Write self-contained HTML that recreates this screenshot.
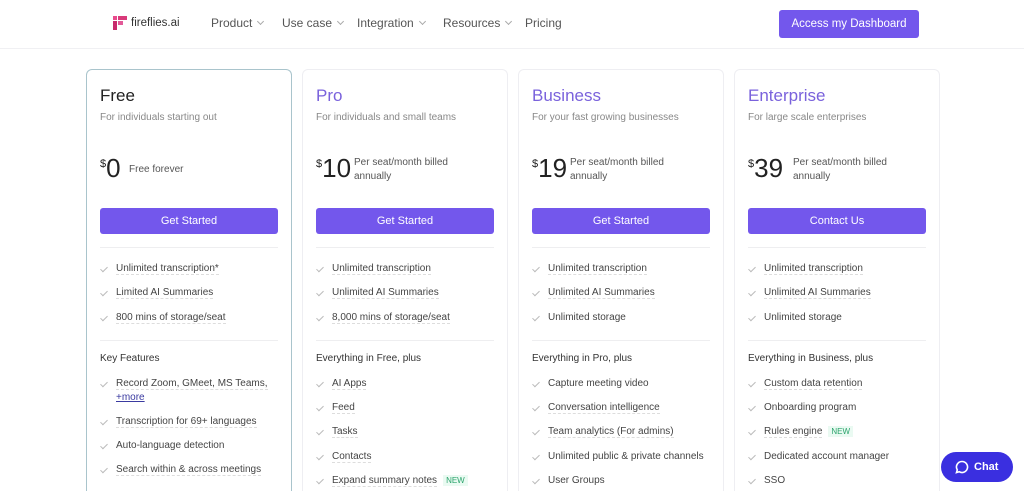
<!DOCTYPE html>
<html><head><meta charset="utf-8"><style>
*{margin:0;padding:0;box-sizing:border-box}
html,body{width:1024px;height:491px;overflow:hidden}
body{background:#fff;font-family:"Liberation Sans",sans-serif;position:relative;color:#333}
.nav{position:absolute;top:0;left:0;width:1024px;height:49px;border-bottom:1px solid #f0f0f3}
.nav span{position:absolute;top:16px;font-size:12px;color:#555}
.chev{display:inline-block;width:5px;height:5px;border-right:1px solid #aaa;border-bottom:1px solid #aaa;transform:rotate(45deg);margin-left:6px;position:relative;top:-3px}
.dash{position:absolute;left:779px;top:10px;width:140px;height:28px;background:#7357ec;border-radius:3px;color:#fff;font-size:11.5px;text-align:center;line-height:28px}
.card{position:absolute;top:69px;width:206px;height:422px;border:1px solid #eeeef2;border-bottom:none;border-radius:6px 6px 0 0}
.card.free{border-color:#a9c4cc}
.t{position:absolute;left:13px;top:16px;font-size:17px;color:#7a62dc}
.free .t{color:#222}
.s{position:absolute;left:13px;top:42px;font-size:10px;color:#888}
.p{position:absolute;left:13px;top:83px;font-size:26px;color:#222;line-height:30px}
.p sup{font-size:11px;position:relative;top:-4px;vertical-align:top}
.pt{position:absolute;left:44px;top:86px;font-size:10px;color:#555;line-height:14px;width:120px}
.btn{position:absolute;left:13px;top:138px;width:178px;height:26px;background:#7357ec;border-radius:3px;color:#fff;font-size:11px;text-align:center;line-height:26px}
.hr{position:absolute;left:13px;width:178px;height:1px;background:#eeeef0}
.i{position:absolute;left:29px;font-size:10px;color:#444;white-space:nowrap;line-height:14px}
.i u{text-decoration:none;border-bottom:1px dashed #ddd}
.i:before{content:"";position:absolute;left:-14px;top:3px;width:3px;height:6px;border-right:1px solid #bbb;border-bottom:1px solid #bbb;transform:rotate(45deg)}
.h{position:absolute;left:13px;font-size:10px;color:#333}
.new{color:#2aa36b;background:#eafaf2;font-size:8px;padding:1px 3px;margin-left:6px}
.chat{position:absolute;left:941px;top:452px;width:72px;height:30px;background:#3a2fe0;border-radius:15px;color:#fff;font-size:11px;font-weight:bold;line-height:30px;padding-left:33px}
</style></head><body>
<div class="nav">
<svg style="position:absolute;left:113px;top:16px" width="14" height="14" viewBox="0 0 14 14"><rect x="0" y="0" width="4" height="4" fill="#e84a8c"/><rect x="5" y="0" width="9" height="4" fill="#d93a7a"/><rect x="0" y="5" width="4" height="9" fill="#c82a6c"/><rect x="5" y="5" width="5" height="4" fill="#e25a98"/></svg>
<span style="left:131px;top:17px;font-size:11.5px;color:#333">fireflies.ai</span>
<span style="left:211px">Product<i class="chev"></i></span>
<span style="left:282px">Use case<i class="chev"></i></span>
<span style="left:357px">Integration<i class="chev"></i></span>
<span style="left:443px">Resources<i class="chev"></i></span>
<span style="left:525px">Pricing</span>
<div class="dash">Access my Dashboard</div>
</div>

<div class="card free" style="left:86px">
<div class="t">Free</div><div class="s">For individuals starting out</div>
<div class="p"><sup>$</sup>0</div><div class="pt" style="left:42px;top:93px">Free forever</div>
<div class="btn">Get Started</div><div class="hr" style="top:177px"></div>
<div class="i" style="top:192px"><u>Unlimited transcription*</u></div>
<div class="i" style="top:216px"><u>Limited AI Summaries</u></div>
<div class="i" style="top:241px"><u>800 mins of storage/seat</u></div>
<div class="hr" style="top:270px"></div>
<div class="h" style="top:283px">Key Features</div>
<div class="i" style="top:307px"><u>Record Zoom, GMeet, MS Teams,</u><br><span style="color:#3a3aa0;text-decoration:underline">+more</span></div>
<div class="i" style="top:345px"><u>Transcription for 69+ languages</u></div>
<div class="i" style="top:369px">Auto-language detection</div>
<div class="i" style="top:393px"><u>Search within &amp; across meetings</u></div>
</div>

<div class="card" style="left:302px">
<div class="t">Pro</div><div class="s">For individuals and small teams</div>
<div class="p"><sup>$</sup>10</div><div class="pt" style="left:51px">Per seat/month billed annually</div>
<div class="btn">Get Started</div><div class="hr" style="top:177px"></div>
<div class="i" style="top:192px"><u>Unlimited transcription</u></div>
<div class="i" style="top:216px"><u>Unlimited AI Summaries</u></div>
<div class="i" style="top:241px"><u>8,000 mins of storage/seat</u></div>
<div class="hr" style="top:270px"></div>
<div class="h" style="top:283px">Everything in Free, plus</div>
<div class="i" style="top:307px"><u>AI Apps</u></div>
<div class="i" style="top:331px"><u>Feed</u></div>
<div class="i" style="top:355px"><u>Tasks</u></div>
<div class="i" style="top:380px"><u>Contacts</u></div>
<div class="i" style="top:404px"><u>Expand summary notes</u><span class="new">NEW</span></div>
</div>

<div class="card" style="left:518px">
<div class="t">Business</div><div class="s">For your fast growing businesses</div>
<div class="p"><sup>$</sup>19</div><div class="pt" style="left:51px">Per seat/month billed annually</div>
<div class="btn">Get Started</div><div class="hr" style="top:177px"></div>
<div class="i" style="top:192px"><u>Unlimited transcription</u></div>
<div class="i" style="top:216px"><u>Unlimited AI Summaries</u></div>
<div class="i" style="top:241px">Unlimited storage</div>
<div class="hr" style="top:270px"></div>
<div class="h" style="top:283px">Everything in Pro, plus</div>
<div class="i" style="top:307px">Capture meeting video</div>
<div class="i" style="top:331px"><u>Conversation intelligence</u></div>
<div class="i" style="top:355px"><u>Team analytics (For admins)</u></div>
<div class="i" style="top:380px">Unlimited public &amp; private channels</div>
<div class="i" style="top:404px">User Groups</div>
</div>

<div class="card" style="left:734px">
<div class="t">Enterprise</div><div class="s">For large scale enterprises</div>
<div class="p"><sup>$</sup>39</div><div class="pt" style="left:58px">Per seat/month billed annually</div>
<div class="btn">Contact Us</div><div class="hr" style="top:177px"></div>
<div class="i" style="top:192px"><u>Unlimited transcription</u></div>
<div class="i" style="top:216px"><u>Unlimited AI Summaries</u></div>
<div class="i" style="top:241px">Unlimited storage</div>
<div class="hr" style="top:270px"></div>
<div class="h" style="top:283px">Everything in Business, plus</div>
<div class="i" style="top:307px"><u>Custom data retention</u></div>
<div class="i" style="top:331px">Onboarding program</div>
<div class="i" style="top:355px"><u>Rules engine</u><span class="new">NEW</span></div>
<div class="i" style="top:380px">Dedicated account manager</div>
<div class="i" style="top:404px">SSO</div>
</div>

<div class="chat"><svg style="position:absolute;left:14px;top:8px" width="14" height="14" viewBox="0 0 14 14"><path d="M7 1.5a5.5 5.5 0 1 1-2.8 10.2L1.5 12.5l.8-2.6A5.5 5.5 0 0 1 7 1.5z" fill="none" stroke="#fff" stroke-width="1.6"/></svg>Chat</div>
</body></html>
